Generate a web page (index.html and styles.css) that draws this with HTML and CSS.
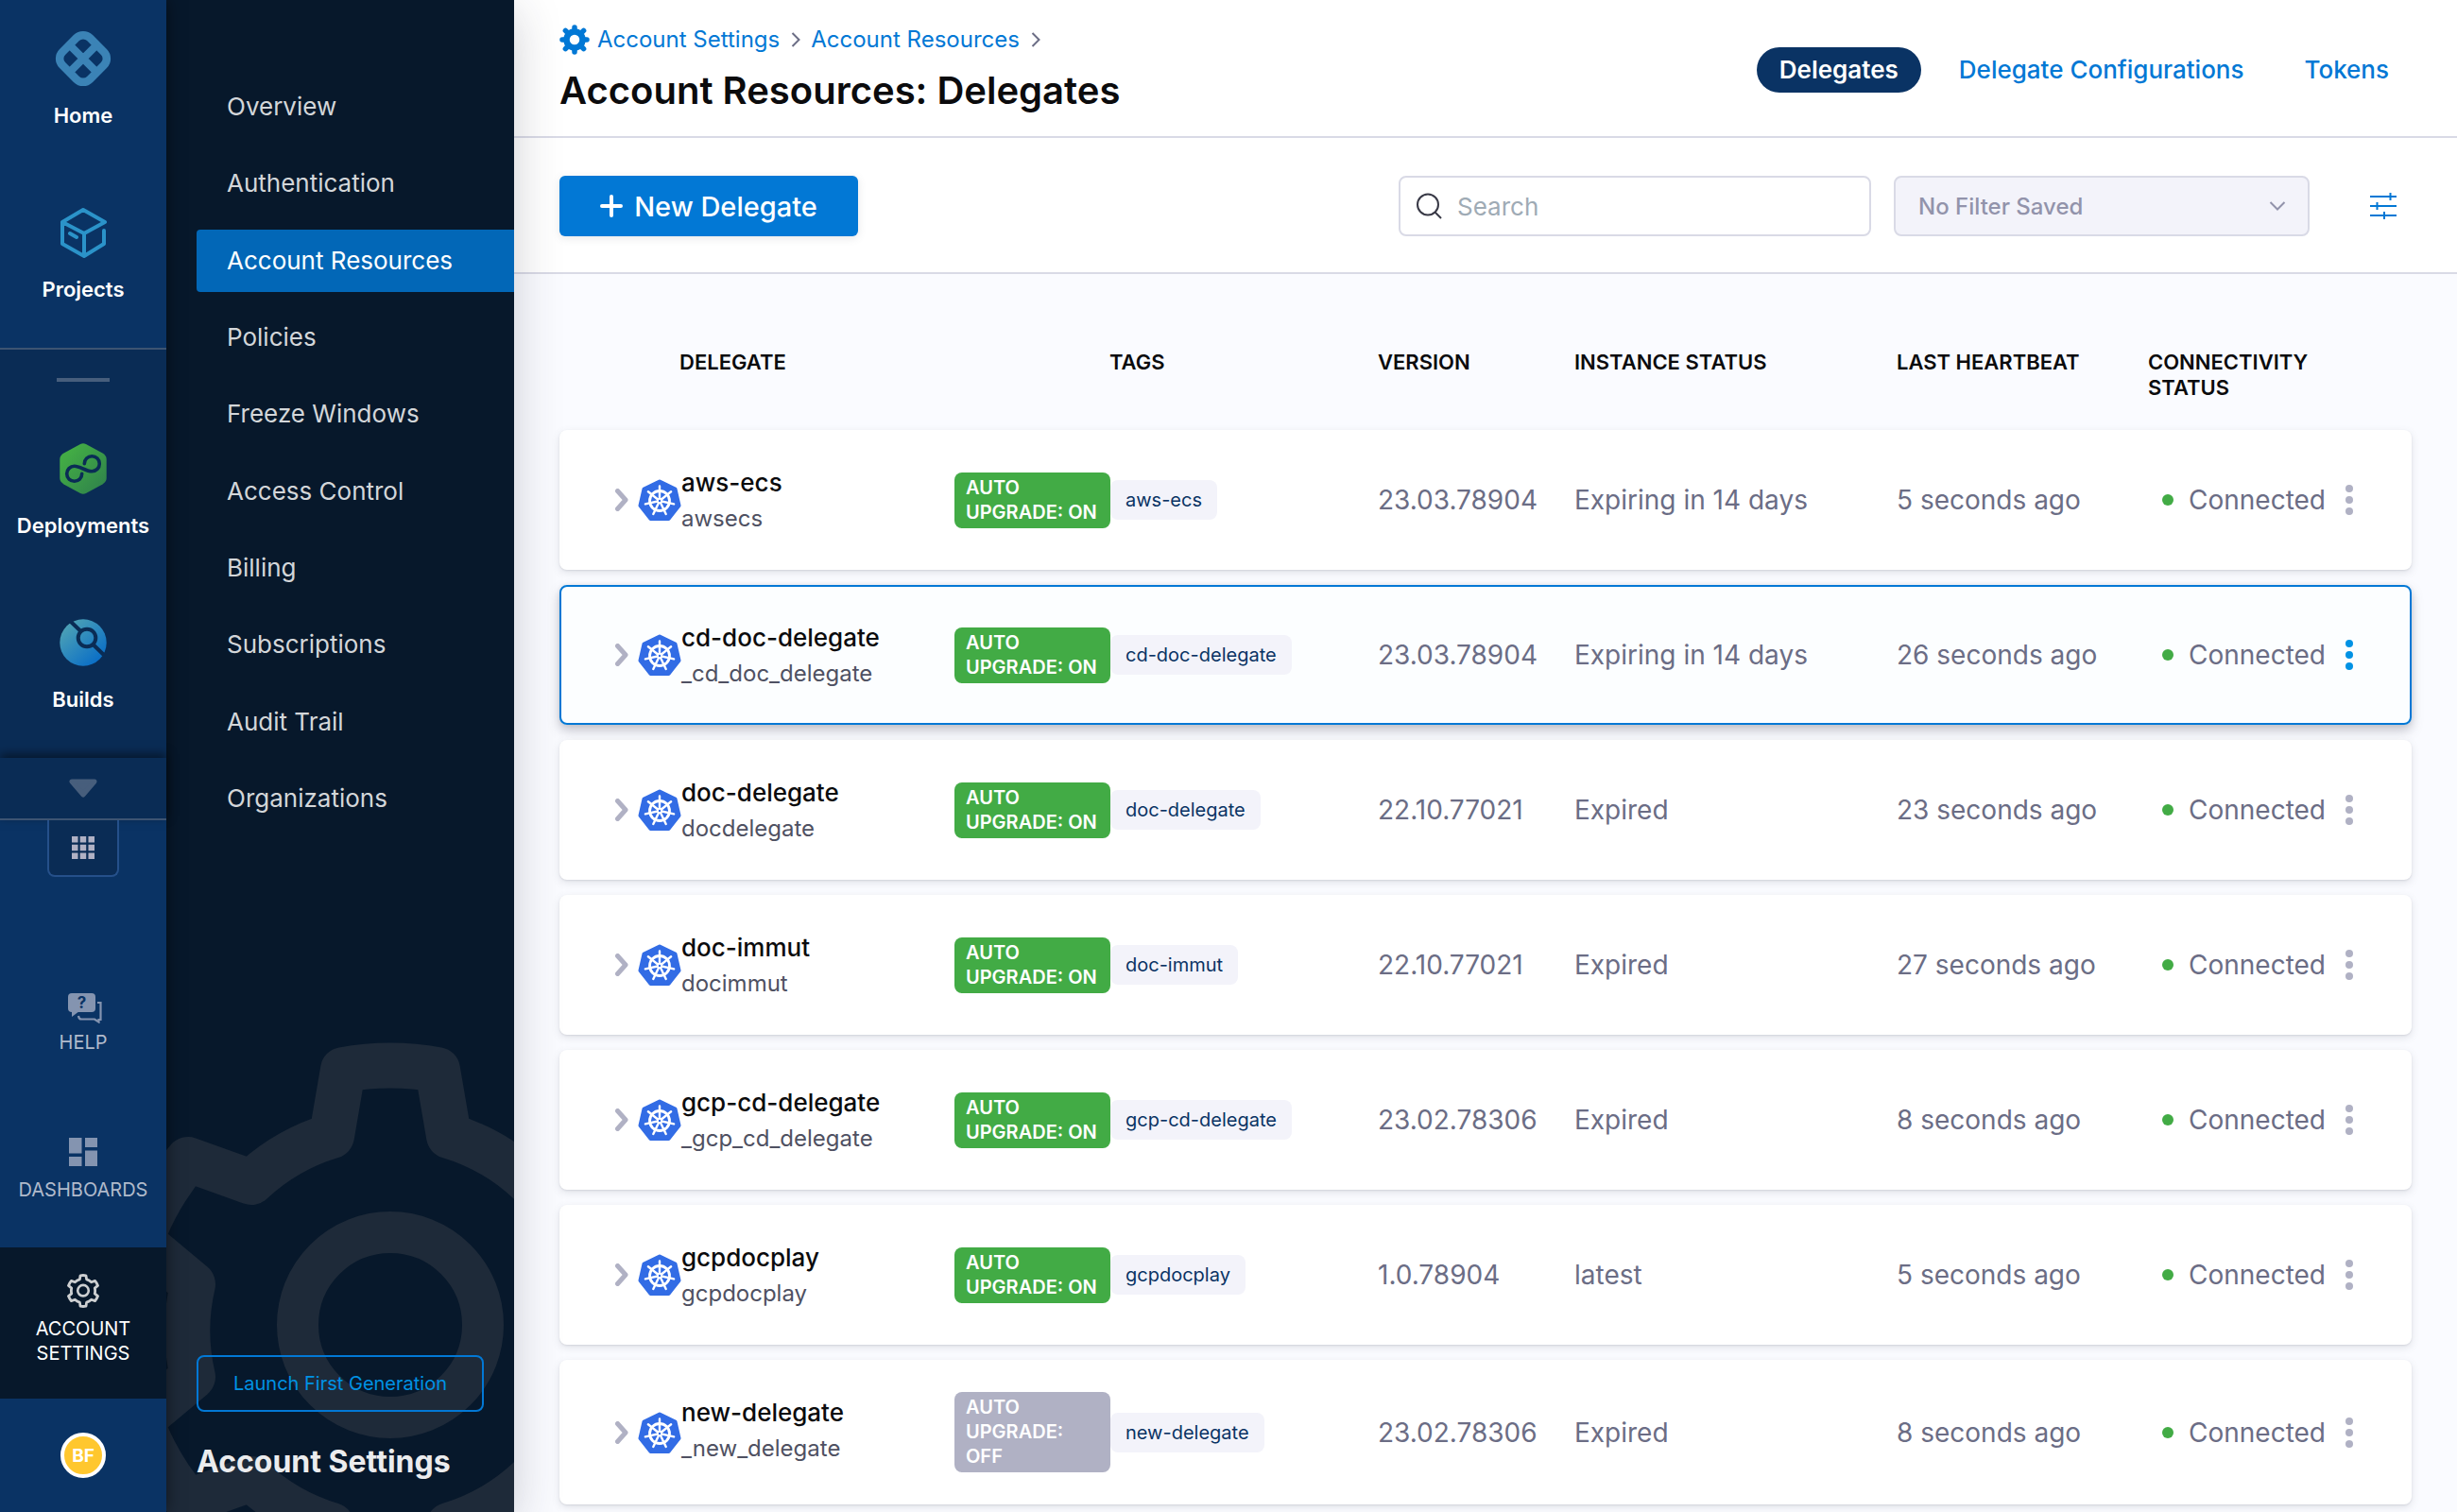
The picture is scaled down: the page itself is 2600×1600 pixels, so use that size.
FILE: index.html
```
<!DOCTYPE html>
<html lang="en">
<head>
<meta charset="utf-8">
<meta name="viewport" content="width=device-width, initial-scale=1">
<title>Account Resources: Delegates</title>
<link rel="stylesheet" href="styles.css">
</head>
<body>
<svg class="sprite" aria-hidden="true">
  <symbol id="gear-outline" viewBox="-306 -306 612 612">
    <path fill="none" stroke="currentColor" stroke-width="48" stroke-linejoin="round" d="M-62-206L-50-276A281 281 0 0 1 50-276L62-206A215 215 0 0 1 147-157L214-181A281 281 0 0 1 264-95L209-49A215 215 0 0 1 209 49L264 95A281 281 0 0 1 214 181L147 157A215 215 0 0 1 62 206L50 276A281 281 0 0 1-50 276L-62 206A215 215 0 0 1-147 157L-214 181A281 281 0 0 1-264 95L-209 49A215 215 0 0 1-209-49L-264-95A281 281 0 0 1-214-181L-147-157A215 215 0 0 1-62-206Z"/>
    <circle cy="-6" r="98" fill="none" stroke="currentColor" stroke-width="44"/>
  </symbol>
  <symbol id="chevron" viewBox="0 0 14 24">
    <path d="M2.500 2.500L11 12L2.500 21.500" fill="none" stroke="currentColor" stroke-width="5" stroke-linecap="round" stroke-linejoin="round"/>
  </symbol>
  <symbol id="crumb-chevron" viewBox="0 0 10 16">
    <path d="M1.500 1L8.500 8L1.500 15" fill="none" stroke="currentColor" stroke-width="2"/>
  </symbol>
  <symbol id="kubernetes" viewBox="0 0 46 44">
    <path fill="#326ce5" stroke="#326ce5" stroke-width="4" stroke-linejoin="round" d="M23 2.500L39.500 10.500L43.500 28L32.500 42H13.500L2.500 28L6.500 10.500Z"/>
    <g fill="none" stroke="#fff" stroke-width="2.400" stroke-linecap="round">
      <circle cx="23" cy="23" r="10.500" stroke-width="2.800"/>
      <path d="M23 23V7.500M23 23L35.100 13.300M23 23L38.100 26.400M23 23L29.700 37M23 23L16.300 37M23 23L7.900 26.400M23 23L10.900 13.300"/>
    </g>
    <circle cx="23" cy="23" r="3" fill="#fff"/><circle cx="23" cy="23" r="1.200" fill="#326ce5"/>
  </symbol>
  <symbol id="more" viewBox="0 0 8 32">
    <g fill="currentColor"><circle cx="4" cy="4" r="4"/><circle cx="4" cy="16" r="4"/><circle cx="4" cy="28" r="4"/></g>
  </symbol>
</svg>

<div class="app">
  <nav class="rail" aria-label="Modules">
    <div class="rail-group">
      <a class="rail-item" href="#">
        <svg class="rail-icon" viewBox="0 0 60 60" fill="none" stroke="#3b83b6" stroke-width="8.500"><g transform="rotate(45 30 30)"><rect x="9.500" y="9.500" width="41" height="41" rx="10"/><path d="M30 9V51M9 30H51" stroke-width="8"/></g></svg>
        <span>Home</span>
      </a>
      <a class="rail-item" href="#">
        <svg class="rail-icon" viewBox="0 0 60 60" fill="none" stroke="#2b93c9" stroke-width="4" stroke-linecap="round" stroke-linejoin="round"><path d="M53 19L30 6L8 19V42L31 55L52 42V28M8 19L31 31L53 19M31 31V55M16 31L23 35"/></svg>
        <span>Projects</span>
      </a>
    </div>
    <div class="rail-group rail-modules">
      <span class="rail-dash"></span>
      <a class="rail-item" href="#">
        <svg class="rail-icon" viewBox="0 0 60 60"><defs><linearGradient id="cd" x1="0" y1="0" x2="1" y2="1"><stop offset=".2" stop-color="#42ab45"/><stop offset="1" stop-color="#2e7f4c"/></linearGradient></defs><path fill="url(#cd)" d="M27 4Q30 2.500 33 4L50.500 13.500Q54.700 16 54.700 20V40Q54.700 44 50.500 46.500L33 56Q30 57.500 27 56L9.500 46.500Q5.300 44 5.300 40V20Q5.300 16 9.500 13.500Z"/><path fill="none" stroke="#0a2c55" stroke-width="3.600" stroke-linecap="round" d="M31.300 24.700a8 8 0 1 1 8 8C33 33 27 27.300 20.700 27.300a8 8 0 1 0 8 8"/></svg>
        <span>Deployments</span>
      </a>
      <a class="rail-item" href="#">
        <svg class="rail-icon" viewBox="0 0 60 60"><defs><linearGradient id="ci" x1=".1" y1=".1" x2=".8" y2=".9"><stop offset="0" stop-color="#4fa3b5"/><stop offset="1" stop-color="#0b6fc6"/></linearGradient></defs><circle cx="30" cy="30" r="24.700" fill="url(#ci)"/><g fill="none" stroke="#0a2c55" stroke-width="4"><circle cx="34" cy="25" r="9.300"/><path d="M16 7L27.500 18M40.500 32L56 47"/></g></svg>
        <span>Builds</span>
      </a>
    </div>
    <button class="rail-more" type="button" aria-label="Show more modules">
      <svg width="30" height="20" viewBox="0 0 30 20"><path d="M3 3H27L15 17Z" fill="#475e7c" stroke="#475e7c" stroke-width="5" stroke-linejoin="round"/></svg>
    </button>
    <button class="rail-grid" type="button" aria-label="All modules">
      <svg width="24" height="24" viewBox="0 0 24 24" fill="#b0b1c4"><path d="M0 0h6.500v6.500H0zM8.700 0h6.500v6.500H8.700zM17.500 0H24v6.500h-6.500zM0 8.700h6.500v6.500H0zM8.700 8.700h6.500v6.500H8.700zM17.500 8.700H24v6.500h-6.500zM0 17.500h6.500V24H0zM8.700 17.500h6.500V24H8.700zM17.500 17.500H24V24h-6.500z"/></svg>
    </button>
    <div class="rail-footer">
      <a class="rail-link" href="#">
        <svg class="rail-link-icon" viewBox="0 0 40 40"><rect x="4" y="8" width="29" height="20" rx="4" fill="currentColor"/><path d="M8 26V33L16 27Z" fill="currentColor"/><text class="help-mark" x="18.500" y="24" text-anchor="middle">?</text><path d="M35 18H38.500V36H36.500V38.500L32 35.500H18Q15.500 35.500 15 32" fill="none" stroke="currentColor" stroke-width="2.200"/></svg>
        <span>HELP</span>
      </a>
      <a class="rail-link" href="#">
        <svg class="rail-link-icon" viewBox="0 0 40 40" fill="currentColor"><path d="M5 5H18.500V21.500H5zM5 25H18.500V35H5zM22 5H35V15H22zM22 18.500H35V35H22z"/></svg>
        <span>DASHBOARDS</span>
      </a>
      <a class="rail-link is-active" href="#">
        <svg class="rail-link-icon"><use href="#gear-outline" x="2" y="2" width="36" height="36"/></svg>
        <span>ACCOUNT SETTINGS</span>
      </a>
      <div class="rail-user"><button class="avatar" type="button">BF</button></div>
    </div>
  </nav>

  <aside class="subnav">
    <svg class="subnav-art" aria-hidden="true"><use href="#gear-outline" x="-69" y="0" width="612" height="612"/></svg>
    <nav class="subnav-list" aria-label="Account settings">
      <a href="#">Overview</a>
      <a href="#">Authentication</a>
      <a class="is-active" href="#">Account Resources</a>
      <a href="#">Policies</a>
      <a href="#">Freeze Windows</a>
      <a href="#">Access Control</a>
      <a href="#">Billing</a>
      <a href="#">Subscriptions</a>
      <a href="#">Audit Trail</a>
      <a href="#">Organizations</a>
    </nav>
    <div class="subnav-footer">
      <button class="launch" type="button">Launch First Generation</button>
      <h2>Account Settings</h2>
    </div>
  </aside>

  <main class="main">
    <header class="page-header">
      <div>
        <nav class="crumbs" aria-label="Breadcrumb">
          <svg width="32" height="32" viewBox="-16 -16 32 32" fill="none" stroke="currentColor"><circle r="8.500" stroke-width="6.500"/><path stroke-width="5.500" stroke-linecap="round" d="M0-10V-13M0 10V13M-10 0H-13M10 0H13M7.500-7.500L9.600-9.600M-7.500 7.500L-9.600 9.600M-7.500-7.500L-9.600-9.600M7.500 7.500L9.600 9.600"/></svg>
          <a href="#">Account Settings</a>
          <svg class="crumb-sep"><use href="#crumb-chevron"/></svg>
          <a href="#">Account Resources</a>
          <svg class="crumb-sep"><use href="#crumb-chevron"/></svg>
        </nav>
        <h1>Account Resources: Delegates</h1>
      </div>
      <nav class="tabs" aria-label="Delegate pages">
        <a class="is-active" href="#">Delegates</a>
        <a href="#">Delegate Configurations</a>
        <a href="#">Tokens</a>
      </nav>
    </header>

    <div class="toolbar">
      <button class="new-delegate" type="button">
        <svg width="24" height="24" viewBox="0 0 24 24"><path d="M12 2V22M2 12H22" stroke="#fff" stroke-width="4" stroke-linecap="round"/></svg>
        New Delegate
      </button>
      <label class="search">
        <svg width="28" height="28" viewBox="0 0 28 28" fill="none" stroke="#383946" stroke-width="2"><circle cx="13" cy="12.500" r="11"/><path d="M20.500 20.500L27 27"/></svg>
        <input type="search" placeholder="Search" aria-label="Search">
      </label>
      <div class="filter-select">
        <select aria-label="Saved filter" disabled><option>No Filter Saved</option></select>
        <svg width="18" height="10" viewBox="0 0 18 10"><path d="M1.500 1L9 8.500L16.500 1" fill="none" stroke="#9293ab" stroke-width="2"/></svg>
      </div>
      <button class="filter-button" type="button" aria-label="Filter">
        <svg width="28" height="28" viewBox="0 0 28 28" stroke="#0278d5" stroke-width="2"><path d="M0 4H28M0 14H28M0 24H28M21.500 0V8M7.500 10V18M15 20V28"/></svg>
      </button>
    </div>

    <section class="content">
      <table class="delegates">
        <thead>
          <tr><th class="name-head">DELEGATE</th><th class="tags-head">TAGS</th><th>VERSION</th><th>INSTANCE STATUS</th><th>LAST HEARTBEAT</th><th class="conn-head">CONNECTIVITY STATUS</th></tr>
        </thead>
        <tbody>
          <tr>
            <td class="delegate"><button class="expand" type="button" aria-label="Expand"><svg><use href="#chevron"/></svg></button><svg class="kube"><use href="#kubernetes"/></svg><div class="names"><strong>aws-ecs</strong><span>awsecs</span></div></td>
            <td><span class="badge">AUTO UPGRADE: ON</span><span class="tag">aws-ecs</span></td>
            <td>23.03.78904</td><td>Expiring in 14 days</td><td>5 seconds ago</td>
            <td class="status"><span class="dot"></span>Connected<button class="more" type="button" aria-label="Options"><svg><use href="#more"/></svg></button></td>
          </tr>
          <tr class="is-selected">
            <td class="delegate"><button class="expand" type="button" aria-label="Expand"><svg><use href="#chevron"/></svg></button><svg class="kube"><use href="#kubernetes"/></svg><div class="names"><strong>cd-doc-delegate</strong><span>_cd_doc_delegate</span></div></td>
            <td><span class="badge">AUTO UPGRADE: ON</span><span class="tag">cd-doc-delegate</span></td>
            <td>23.03.78904</td><td>Expiring in 14 days</td><td>26 seconds ago</td>
            <td class="status"><span class="dot"></span>Connected<button class="more" type="button" aria-label="Options"><svg><use href="#more"/></svg></button></td>
          </tr>
          <tr>
            <td class="delegate"><button class="expand" type="button" aria-label="Expand"><svg><use href="#chevron"/></svg></button><svg class="kube"><use href="#kubernetes"/></svg><div class="names"><strong>doc-delegate</strong><span>docdelegate</span></div></td>
            <td><span class="badge">AUTO UPGRADE: ON</span><span class="tag">doc-delegate</span></td>
            <td>22.10.77021</td><td>Expired</td><td>23 seconds ago</td>
            <td class="status"><span class="dot"></span>Connected<button class="more" type="button" aria-label="Options"><svg><use href="#more"/></svg></button></td>
          </tr>
          <tr>
            <td class="delegate"><button class="expand" type="button" aria-label="Expand"><svg><use href="#chevron"/></svg></button><svg class="kube"><use href="#kubernetes"/></svg><div class="names"><strong>doc-immut</strong><span>docimmut</span></div></td>
            <td><span class="badge">AUTO UPGRADE: ON</span><span class="tag">doc-immut</span></td>
            <td>22.10.77021</td><td>Expired</td><td>27 seconds ago</td>
            <td class="status"><span class="dot"></span>Connected<button class="more" type="button" aria-label="Options"><svg><use href="#more"/></svg></button></td>
          </tr>
          <tr>
            <td class="delegate"><button class="expand" type="button" aria-label="Expand"><svg><use href="#chevron"/></svg></button><svg class="kube"><use href="#kubernetes"/></svg><div class="names"><strong>gcp-cd-delegate</strong><span>_gcp_cd_delegate</span></div></td>
            <td><span class="badge">AUTO UPGRADE: ON</span><span class="tag">gcp-cd-delegate</span></td>
            <td>23.02.78306</td><td>Expired</td><td>8 seconds ago</td>
            <td class="status"><span class="dot"></span>Connected<button class="more" type="button" aria-label="Options"><svg><use href="#more"/></svg></button></td>
          </tr>
          <tr>
            <td class="delegate"><button class="expand" type="button" aria-label="Expand"><svg><use href="#chevron"/></svg></button><svg class="kube"><use href="#kubernetes"/></svg><div class="names"><strong>gcpdocplay</strong><span>gcpdocplay</span></div></td>
            <td><span class="badge">AUTO UPGRADE: ON</span><span class="tag">gcpdocplay</span></td>
            <td>1.0.78904</td><td>latest</td><td>5 seconds ago</td>
            <td class="status"><span class="dot"></span>Connected<button class="more" type="button" aria-label="Options"><svg><use href="#more"/></svg></button></td>
          </tr>
          <tr>
            <td class="delegate"><button class="expand" type="button" aria-label="Expand"><svg><use href="#chevron"/></svg></button><svg class="kube"><use href="#kubernetes"/></svg><div class="names"><strong>new-delegate</strong><span>_new_delegate</span></div></td>
            <td><span class="badge is-off">AUTO UPGRADE: OFF</span><span class="tag">new-delegate</span></td>
            <td>23.02.78306</td><td>Expired</td><td>8 seconds ago</td>
            <td class="status"><span class="dot"></span>Connected<button class="more" type="button" aria-label="Options"><svg><use href="#more"/></svg></button></td>
          </tr>
        </tbody>
      </table>
    </section>
  </main>
</div>
</body>
</html>
```
FILE: styles.css
```
* { box-sizing: border-box; }

body {
  margin: 0;
  font-family: Inter, "Liberation Sans", sans-serif;
  color: #0b0b0d;
  background: #fafbff;
}

a { color: inherit; text-decoration: none; }
button { font: inherit; color: inherit; border: 0; padding: 0; background: none; cursor: pointer; }
svg { display: block; flex: none; }
.sprite { position: absolute; width: 0; height: 0; }

.app {
  display: grid;
  grid-template-columns: 176px 368px minmax(0, 1fr);
  min-height: 100vh;
}

/* Module rail */
.rail {
  display: flex;
  flex-direction: column;
  background: #0a3364;
  color: #fff;
  z-index: 3;
  box-shadow: 0 0 16px rgba(0, 0, 0, .5);
}
.rail-item {
  display: flex;
  flex-direction: column;
  align-items: center;
  gap: 16px;
  height: 184px;
  padding-top: 32px;
  font-size: 22px;
  font-weight: 600;
  line-height: 28px;
}
.rail-icon { width: 60px; height: 60px; }
.rail-modules {
  border-top: 2px solid #3d5472;
  background: #0a2c55;
}
.rail-dash {
  display: block;
  width: 56px;
  height: 4px;
  margin: 30px auto;
  background: #475e7c;
}
.rail-more {
  display: grid;
  place-items: center;
  height: 66px;
  border-bottom: 2px solid #3d5472;
  background: #0a2c55;
  box-shadow: 0 -4px 10px rgba(0, 0, 0, .5);
}
.rail-grid {
  display: grid;
  place-items: center;
  align-self: center;
  width: 76px;
  height: 60px;
  border: 2px solid #25508a;
  border-top: 0;
  border-radius: 0 0 8px 8px;
  background: #0a2c55;
}
.rail-footer { margin-top: auto; }
.rail-link {
  display: flex;
  flex-direction: column;
  align-items: center;
  gap: 7px;
  padding: 35px 16px 48px;
  font-size: 20px;
  line-height: 26px;
  text-align: center;
  color: #b0bacb;
}
.rail-link-icon { width: 40px; height: 40px; color: #8494b0; }
.help-mark { font: 700 17px Inter, sans-serif; fill: #0a3364; }
.rail-link.is-active { padding: 26px 16px 35px; background: #07182b; color: #fff; }
.rail-link.is-active .rail-link-icon { color: #cdcfd1; }
.rail-user { display: grid; place-items: center; height: 120px; }
.avatar {
  width: 48px;
  height: 48px;
  border: 4px solid #fff;
  border-radius: 50%;
  background: #ffc72e;
  color: #fff;
  font-size: 19px;
  font-weight: 700;
}

/* Settings navigation */
.subnav {
  position: relative;
  z-index: 2;
  display: flex;
  flex-direction: column;
  padding: 80px 0 33px 32px;
  background: #07182b;
  box-shadow: 0 12px 48px rgba(40, 41, 61, .22);
}
.subnav-art {
  position: absolute;
  inset: auto 0 0 0;
  width: 100%;
  height: 498px;
  color: #1e2a39;
}
.subnav-list {
  position: relative;
  display: flex;
  flex-direction: column;
  justify-content: space-between;
  height: 798px;
  font-size: 26px;
  color: #d3d6d9;
}
.subnav-list a { padding-left: 32px; line-height: 66px; border-radius: 4px 0 0 4px; }
.subnav-list .is-active { background: #0267b7; color: #fff; }
.subnav-footer { position: relative; margin-top: auto; padding-right: 32px; }
.launch {
  width: 100%;
  height: 60px;
  border: 2px solid #0278d5;
  border-radius: 8px;
  color: #0092e4;
  font-size: 20px;
}
.subnav-footer h2 {
  margin: 33px 0 0;
  font-size: 32px;
  line-height: 40px;
  font-weight: 700;
  color: #ebecee;
}

/* Page header */
.page-header {
  display: flex;
  justify-content: space-between;
  align-items: flex-start;
  padding: 26px 48px 24px;
  border-bottom: 2px solid #d9dae6;
  background: #fff;
}
.crumbs {
  display: flex;
  align-items: center;
  font-size: 24px;
  line-height: 32px;
  color: #0278d5;
}
.crumbs > a { margin-left: 8px; }
.crumb-sep { width: 10px; height: 16px; margin: 0 3px 0 12px; color: #6b6d85; }
.page-header h1 { margin: 14px 0 0; font-size: 40px; line-height: 48px; font-weight: 600; }
.tabs { display: flex; gap: 16px; padding-top: 24px; font-size: 26px; font-weight: 500; line-height: 48px; color: #0278d5; }
.tabs a { padding: 0 24px; border-radius: 24px; }
.tabs .is-active { background: #0a3364; color: #fff; font-weight: 600; }

/* Toolbar */
.toolbar {
  display: flex;
  align-items: center;
  padding: 40px 48px 38px;
  border-bottom: 2px solid #d9dae6;
  background: #fff;
}
.new-delegate {
  display: flex;
  align-items: center;
  justify-content: center;
  gap: 12px;
  width: 316px;
  height: 64px;
  margin-right: auto;
  border-radius: 6px;
  background: #0278d5;
  box-shadow: 0 2px 8px rgba(96, 97, 112, .16);
  color: #fff;
  font-size: 29px;
  font-weight: 500;
}
.search {
  display: flex;
  align-items: center;
  gap: 16px;
  width: 500px;
  height: 64px;
  padding: 0 16px;
  border: 2px solid #d9dae6;
  border-radius: 8px;
  background: #fff;
}
.search input {
  flex: 1;
  min-width: 0;
  padding: 0;
  border: 0;
  outline: 0;
  font: inherit;
  font-size: 26px;
  background: none;
}
.search input::placeholder { color: #9fabb5; opacity: 1; }
.filter-select { display: grid; align-items: center; width: 440px; margin-left: 24px; }
.filter-select > * { grid-area: 1 / 1; }
.filter-select select {
  appearance: none;
  height: 64px;
  padding: 0 24px;
  border: 2px solid #d9dae6;
  border-radius: 8px;
  background: #f3f3fa;
  color: #9293ab;
  opacity: 1;
  font: inherit;
  font-size: 24px;
  font-weight: 500;
}
.filter-select svg { justify-self: end; margin-right: 25px; }
.filter-button { display: grid; place-items: center; width: 60px; height: 64px; margin-left: 48px; }

/* Delegates table */
.content { padding: 80px 48px 8px; }
.delegates, .delegates thead { display: block; }
.delegates tbody { display: grid; gap: 16px; }
.delegates tr {
  display: grid;
  grid-template-columns: 418fr 448fr 208fr 341fr 266fr 279fr;
}
.delegates thead { margin-bottom: 31px; font-size: 22px; line-height: 27px; }
.delegates th { padding: 0; text-align: left; font-weight: 600; }
.delegates .name-head { padding-left: 127px; }
.delegates .tags-head { padding-left: 164px; }
.delegates .conn-head { padding-right: 96px; }
.delegates tbody tr {
  min-height: 148px;
  border-radius: 8px;
  background: #fff;
  box-shadow: 0 1px 2px rgba(40, 41, 61, .1), 0 3px 8px rgba(96, 97, 112, .16);
}
.delegates tbody .is-selected {
  background: #fcfeff;
  outline: 2px solid #0278d5;
  outline-offset: -2px;
  box-shadow: 0 0 4px rgba(40, 41, 61, .08), 0 6px 12px rgba(96, 97, 112, .36);
}
.delegates td {
  display: flex;
  align-items: center;
  padding: 0;
  font-size: 28px;
  color: #6b6d85;
}
.delegates .delegate { padding-left: 57px; }
.expand { padding: 0 8px 0 2px; color: #b0b1c4; }
.expand svg { width: 14px; height: 24px; }
.kube { width: 46px; height: 44px; margin-left: 2px; }
.names { display: grid; align-self: start; padding-top: 37px; line-height: 38px; font-size: 24px; color: #4f5162; }
.names strong { font-size: 26px; font-weight: 500; color: #0b0b0d; }
.badge {
  width: 165px;
  margin: 34px 0;
  padding: 3px 12px 4px;
  border-radius: 8px;
  background: #42ab45;
  color: #fff;
  font-size: 20px;
  font-weight: 600;
  line-height: 26px;
}
.badge.is-off { background: #b0b1c4; }
.tag {
  padding: 0 16px;
  border-radius: 8px;
  background: #f3f3fa;
  color: #0a3364;
  font-size: 20px;
  line-height: 42px;
}
.delegates .status { padding-left: 15px; }
.dot { width: 12px; height: 12px; margin-right: 16px; border-radius: 50%; background: #42ab45; }
.more { margin-left: 13px; padding: 8px; color: #b0b1c4; }
.more svg { width: 8px; height: 32px; }
.is-selected .more { color: #0092e4; }
```
